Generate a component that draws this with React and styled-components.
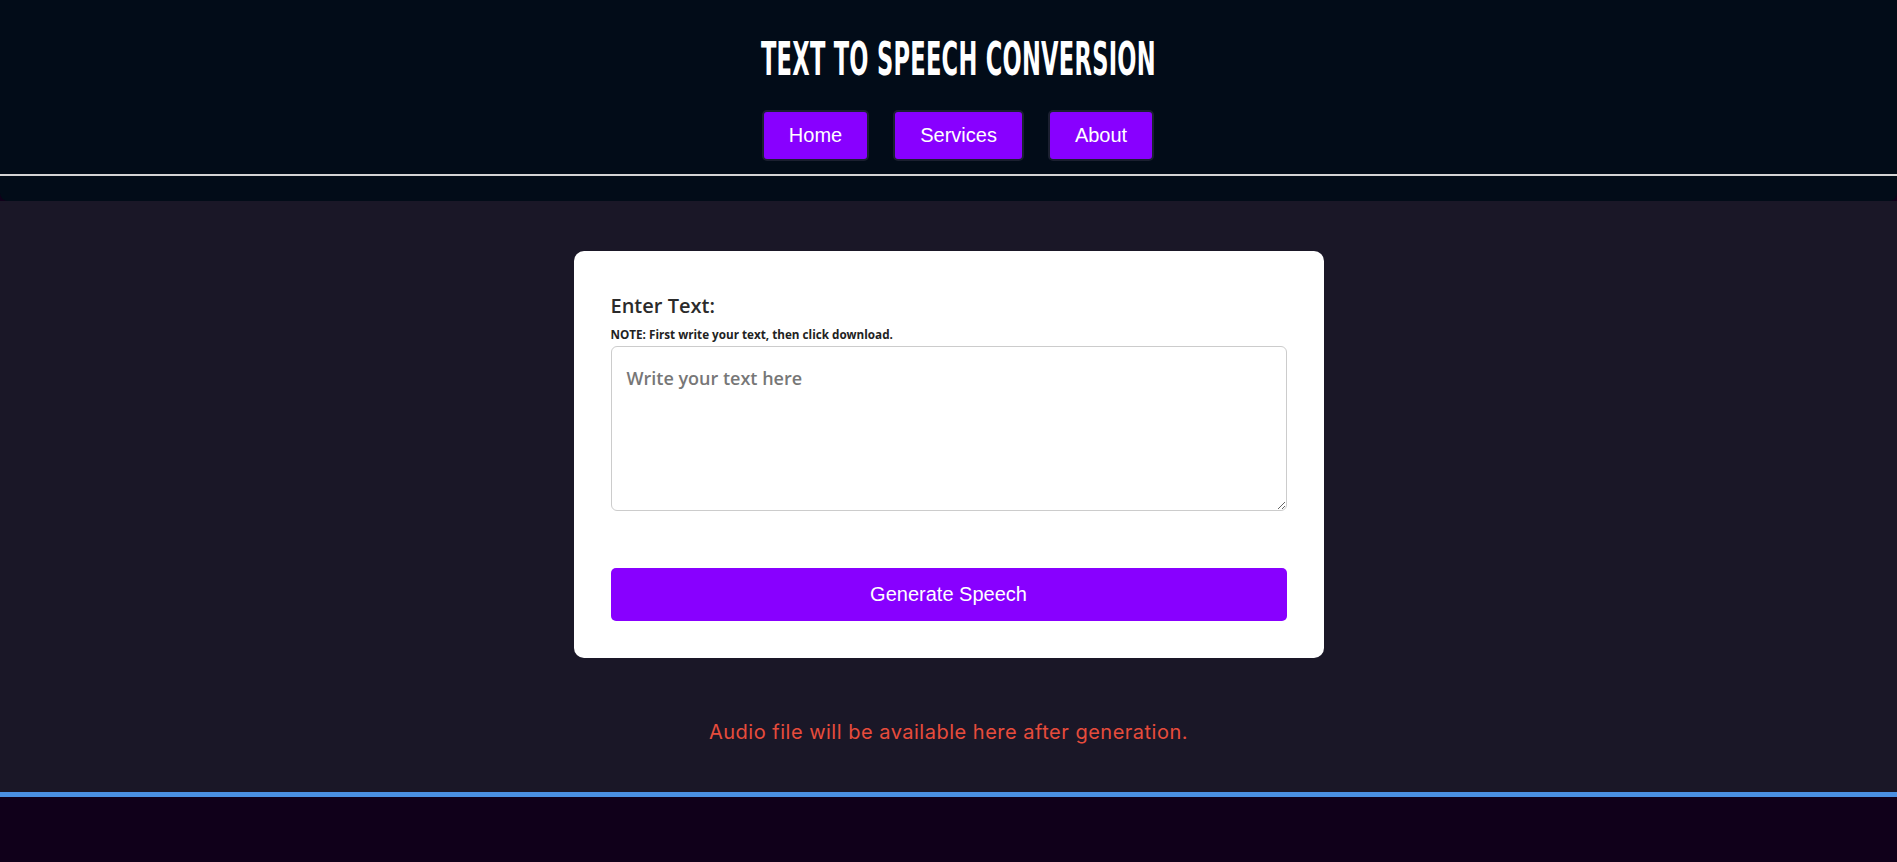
import React, { useState } from 'react';
import styled, { createGlobalStyle } from 'styled-components';

const GlobalStyle = createGlobalStyle`
  html, body {
    margin: 0;
    padding: 0;
    background: #10001a;
  }
  * {
    box-sizing: border-box;
  }
`;

const Header = styled.header`
  background: #020c18;
  border-radius: 0 0 8px 8px;
  padding: 37px 0 25px;
  display: flex;
  flex-direction: column;
`;

const Title = styled.h1`
  margin: 0;
  padding-left: 19px;
  text-align: center;
  font-family: "DejaVu Sans Condensed", "DejaVu Sans", sans-serif;
  font-weight: 700;
  font-size: 46px;
  line-height: 44px;
  color: #fff;
  letter-spacing: 0.5px;

  span {
    display: inline-block;
    transform: scaleX(0.545);
  }
`;

const Nav = styled.nav`
  display: flex;
  justify-content: center;
  gap: 24px;
  padding-left: 19px;
  margin-top: 29px;
`;

const NavButton = styled.button`
  background: #8800ff;
  color: #fff;
  border: 2px solid #1b2030;
  border-radius: 5px;
  padding: 12px 25px;
  font-family: "Liberation Sans", Arial, sans-serif;
  font-size: 20px;
  line-height: 23px;
  cursor: pointer;
`;

const Rule = styled.div`
  height: 2px;
  background: #d4d4d4;
  margin-top: 13px;
`;

const Main = styled.main`
  background: #1a1727;
  padding: 50px 0 48px;
  display: flex;
  flex-direction: column;
  align-items: center;
`;

const Card = styled.div`
  width: 750px;
  background: #fff;
  border-radius: 10px;
  padding: 43px 37px 37px;
  display: flex;
  flex-direction: column;
`;

const Label = styled.label`
  font-family: "Open Sans", Lato, sans-serif;
  font-weight: 600;
  font-size: 20px;
  line-height: 24px;
  color: #2b2b2b;
`;

const Note = styled.p`
  margin: 10px 0 5px;
  font-family: "Open Sans", Lato, sans-serif;
  font-weight: 700;
  font-size: 11.7px;
  line-height: 13px;
  color: #222;
`;

const TextArea = styled.textarea`
  width: 100%;
  height: 165px;
  border: 1px solid #cccccc;
  border-radius: 6px;
  padding: 19px 15px 16px;
  font-family: "Open Sans", Lato, sans-serif;
  font-weight: 600;
  font-size: 18px;
  color: #333;
  outline: none;
  resize: vertical;

  &::placeholder {
    color: #777;
  }
`;

const GenerateButton = styled.button`
  margin-top: 57px;
  width: 100%;
  height: 53px;
  border: none;
  border-radius: 5px;
  background: #8800ff;
  color: #fff;
  font-family: "Liberation Sans", Arial, sans-serif;
  font-size: 20px;
  cursor: pointer;
`;

const AudioNote = styled.p`
  margin: 62px 0 0;
  font-family: Inter, "Open Sans", sans-serif;
  font-size: 20px;
  line-height: 24px;
  letter-spacing: 0.5px;
  color: #e74c3c;
`;

const Footer = styled.footer`
  border-top: 5px solid #4a90e2;
  background: #10001a;
  height: 72px;
`;

export default function App() {
  const [text, setText] = useState('');

  return (
    <>
      <GlobalStyle />
      <Header>
        <Title><span>TEXT TO SPEECH CONVERSION</span></Title>
        <Nav>
          <NavButton>Home</NavButton>
          <NavButton>Services</NavButton>
          <NavButton>About</NavButton>
        </Nav>
        <Rule />
      </Header>
      <Main>
        <Card>
          <Label htmlFor="tts-text">Enter Text:</Label>
          <Note>NOTE: First write your text, then click download.</Note>
          <TextArea
            id="tts-text"
            placeholder="Write your text here"
            value={text}
            onChange={(e) => setText(e.target.value)}
          />
          <GenerateButton>Generate Speech</GenerateButton>
        </Card>
        <AudioNote>Audio file will be available here after generation.</AudioNote>
      </Main>
      <Footer />
    </>
  );
}
